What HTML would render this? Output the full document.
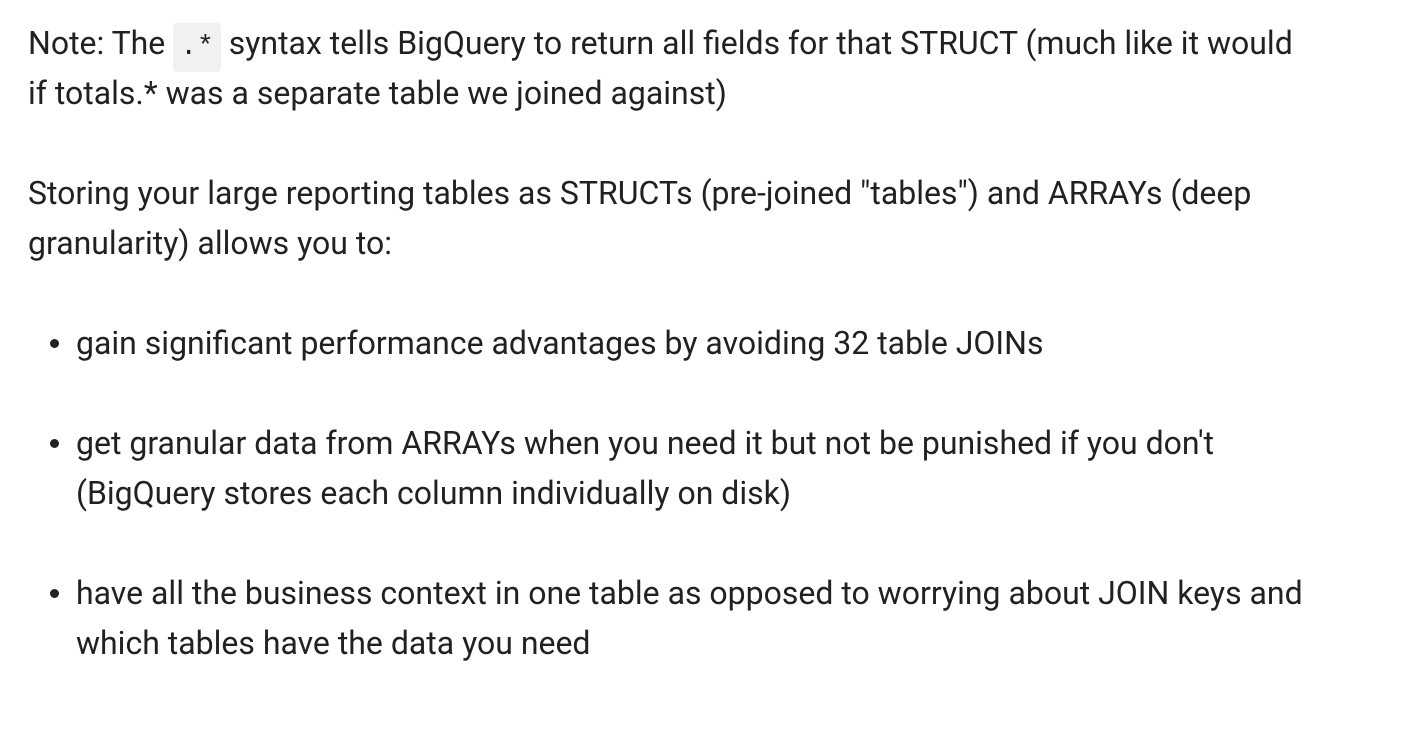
<!DOCTYPE html>
<html><head><meta charset="utf-8"><style>
html,body{margin:0;padding:0;background:#fff;}
body{width:1414px;height:746px;overflow:hidden;font-family:"Roboto","Liberation Sans",sans-serif;font-size:32px;line-height:50px;color:#202124;}
.wrap{position:absolute;left:28px;top:18px;white-space:nowrap;}
p{margin:0 0 50px 0;height:100px;}
code{font-family:"Liberation Mono",monospace;font-size:28px;line-height:1;background:#f1f1f1;border-radius:4px;padding:9px 7px;}
ul{margin:0;padding:0;list-style:none;}
li{position:relative;padding-left:48px;margin-bottom:50px;}
li.one{height:50px;}
li:before{content:"";position:absolute;left:22px;top:21px;width:9px;height:9px;border-radius:50%;background:#202124;}
</style></head><body><div class="wrap">
<p>Note: The <code>.*</code> syntax tells BigQuery to return all fields for that STRUCT (much like it would<br>if totals.* was a separate table we joined against)</p>
<p>Storing your large reporting tables as STRUCTs (pre-joined "tables") and ARRAYs (deep<br>granularity) allows you to:</p>
<ul>
<li class="one">gain significant performance advantages by avoiding 32 table JOINs</li>
<li>get granular data from ARRAYs when you need it but not be punished if you don't<br>(BigQuery stores each column individually on disk)</li>
<li>have all the business context in one table as opposed to worrying about JOIN keys and<br>which tables have the data you need</li>
</ul>
</div></body></html>
